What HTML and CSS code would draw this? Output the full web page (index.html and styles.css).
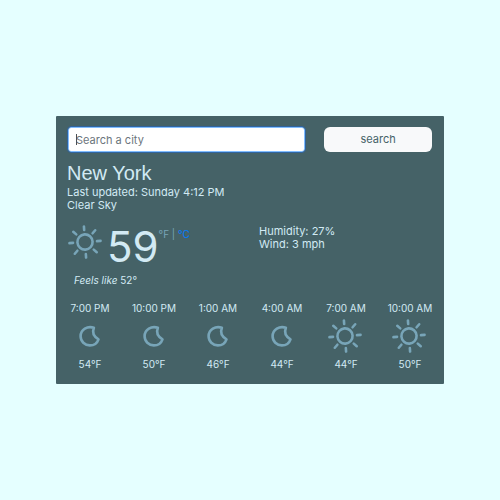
FILE: index.html
```html
<!DOCTYPE html>
<html lang="en">
<head>
<meta charset="utf-8">
<meta name="viewport" content="width=device-width, initial-scale=1">
<title>Weather</title>
<link rel="stylesheet" href="styles.css">
</head>
<body>
<svg class="sprite" aria-hidden="true">
  <symbol id="sun" viewBox="0 0 34 34">
    <g transform="rotate(-4 17 17)">
      <circle cx="17" cy="17" r="7.6"/>
      <path d="M17 1.400v3.600M17 29v3.600M1.400 17h3.600M29 17h3.600M6 6l2.800 2.800M25.200 25.200l2.800 2.800M6 28l2.800-2.800M25.200 8.800l2.800-2.800"/>
    </g>
  </symbol>
  <symbol id="moon" viewBox="0 0 34 34">
    <path d="M21.900 8.800C15.500 6.600 8.600 10.500 8.600 17.300c0 5.200 4.200 9.100 9.200 9.100 3.900 0 7.400-2.300 8.700-6.100C22 17.700 20 13.500 21.900 8.800z"/>
  </symbol>
</svg>
<main class="card">
  <form class="search">
    <div class="field">
      <input class="search-input" type="text" placeholder="Search a city" aria-label="City">
      <span class="caret"></span>
    </div>
    <button class="search-button" type="button">search</button>
  </form>
  <header class="place">
    <h1>New York</h1>
    <p>Last updated: Sunday 4:12 PM</p>
    <p>Clear Sky</p>
  </header>
  <section class="current">
    <div class="reading">
      <svg class="icon" role="img" aria-label="Clear sky"><use href="#sun"/></svg>
      <strong class="degrees">59</strong>
      <span class="units">°F | <a href="#celsius">°C</a></span>
    </div>
    <div class="details">
      <p>Humidity: 27%</p>
      <p>Wind: 3 mph</p>
    </div>
  </section>
  <p class="feels"><em>Feels like</em> 52°</p>
  <section class="forecast">
    <div class="hour"><span>7:00 PM</span><svg class="icon"><use href="#moon"/></svg><span>54°F</span></div>
    <div class="hour"><span>10:00 PM</span><svg class="icon"><use href="#moon"/></svg><span>50°F</span></div>
    <div class="hour"><span>1:00 AM</span><svg class="icon"><use href="#moon"/></svg><span>46°F</span></div>
    <div class="hour"><span>4:00 AM</span><svg class="icon"><use href="#moon"/></svg><span>44°F</span></div>
    <div class="hour"><span>7:00 AM</span><svg class="icon"><use href="#sun"/></svg><span>44°F</span></div>
    <div class="hour"><span>10:00 AM</span><svg class="icon"><use href="#sun"/></svg><span>50°F</span></div>
  </section>
</main>
</body>
</html>
```
FILE: styles.css
```css
* {
  box-sizing: border-box;
}

body {
  margin: 0;
  min-height: 100vh;
  padding: 0 56px;
  display: flex;
  align-items: center;
  background: #e5ffff;
  color: #d2eaf4;
  font: 11px/13px Inter, "Liberation Sans", sans-serif;
}

h1,
p {
  margin: 0;
}

.sprite {
  position: absolute;
  width: 0;
  height: 0;
}

.card {
  width: 100%;
  padding: 11px 2px 13px;
  border-radius: 1px;
  background: #456267;
}

.search {
  display: grid;
  grid-template-columns: 11fr 5fr;
  gap: 19px;
  padding: 0 10px;
}

.field {
  position: relative;
}

.search-input,
.search-button {
  height: 25px;
  font: inherit;
}

.search-input {
  display: block;
  width: 100%;
  padding: 0 7px;
  border: 1px solid #80bdff;
  border-radius: 3px;
  outline: 1px solid #30649f;
  background: #fff;
  color: #495057;
}

.search-input::placeholder {
  color: #6c757d;
  opacity: 1;
}

.caret {
  position: absolute;
  top: 7px;
  left: 8px;
  width: 1px;
  height: 11px;
  background: #495057;
}

.search-button {
  padding: 0;
  border: 0;
  border-radius: 6px;
  background: #f8f9fa;
  color: #456267;
}

.place {
  padding: 9px 9px 0;
}

.place h1 {
  font: 400 20px/25px "Liberation Sans", sans-serif;
}

.current {
  display: grid;
  grid-template-columns: 1fr 1fr;
  padding: 13px 10px 0;
}

.reading {
  display: flex;
  align-items: flex-start;
}

.icon {
  width: 34px;
  height: 34px;
  fill: none;
  stroke: #78a5b8;
  stroke-width: 2.6;
  stroke-linecap: round;
  stroke-linejoin: round;
}

.degrees {
  margin-left: 5px;
  font-size: 42px;
  line-height: 44px;
  font-weight: 400;
}

.units {
  padding-top: 3px;
  color: #78a5b8;
  font-size: 10px;
}

.units a {
  color: #007bff;
  text-decoration: none;
}

.details {
  padding-left: 9px;
}

.feels {
  padding: 5px 16px 0;
  font-size: 10px;
}

.forecast {
  display: grid;
  grid-template-columns: repeat(6, 1fr);
  padding-top: 15px;
  font-size: 10px;
}

.hour {
  display: flex;
  flex-direction: column;
  align-items: center;
}

.hour .icon {
  margin: 4px 2px 5px 0;
}
```
